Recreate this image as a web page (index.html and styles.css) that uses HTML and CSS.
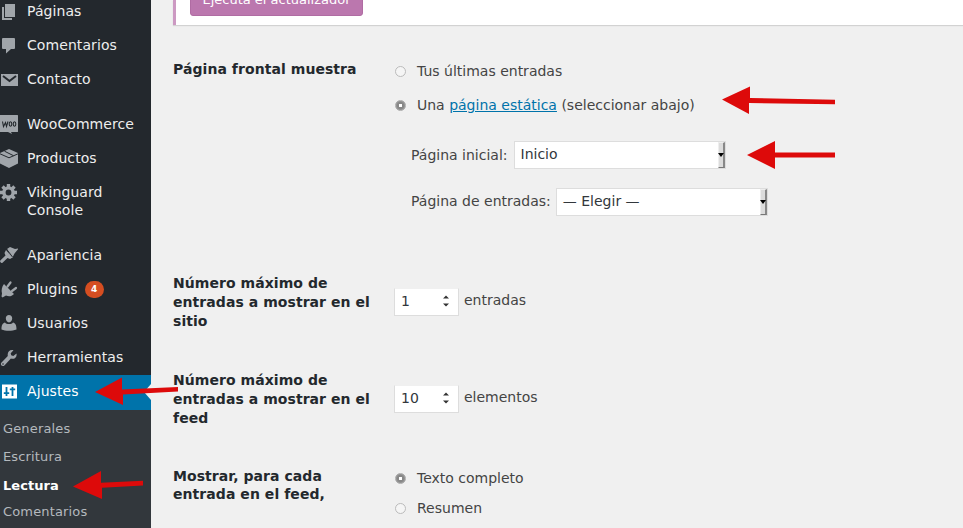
FILE: index.html
```
<!DOCTYPE html>
<html lang="es">
<head>
<meta charset="utf-8">
<title>Ajustes de lectura</title>
<link rel="stylesheet" href="styles.css">
</head>
<body>
<div class="app">
  <nav class="sidebar">
    <ul class="menu">
      <li class="item"><svg class="icon" viewBox="0 0 20 20"><path d="M7 3h10v13H7zM4 6h2v11h8v2H4z"/></svg><span>Páginas</span></li>
      <li class="item"><svg class="icon" viewBox="0 0 20 20"><path d="M5 3h11a1 1 0 0 1 1 1v9a1 1 0 0 1-1 1h-3l-5 4.500V14H5a1 1 0 0 1-1-1V4a1 1 0 0 1 1-1z"/></svg><span>Comentarios</span></li>
      <li class="item"><svg class="icon" viewBox="0 0 20 20"><path d="M3 5h17v12H3z"/><path class="cut" d="M5 7l6.500 5L18 7"/></svg><span>Contacto</span></li>
      <li class="item spaced"><svg class="icon woo" viewBox="0 0 20 20"><path d="M1 1h18a2 2 0 0 1 2 2v13a2 2 0 0 1-2 2h-6l1 2-4-2H1z"/><path class="woo-line" d="M4.500 7.500l1 5 2-4 1 4 1.500-5"/><ellipse class="woo-line" cx="12.500" cy="10" rx="1.300" ry="2.200"/><ellipse class="woo-line" cx="16.500" cy="10" rx="1.300" ry="2.200"/></svg><span>WooCommerce</span></li>
      <li class="item"><svg class="icon" viewBox="0 0 20 20"><path d="M11 1l9 4v10.500L11 20l-9-4.500V5z"/><path class="seam" d="M2 5.800l9 4 9-4M6.500 3.200l9 4.500"/></svg><span>Productos</span></li>
      <li class="item tall"><svg class="icon" viewBox="0 0 20 20"><circle class="gear-ring" cx="10.500" cy="10.500" r="4.600"/><path class="gear-teeth" d="M10.500 2v3M10.500 16v3M2 10.500h3M16 10.500h3M4.500 4.500l2.200 2.200M14.300 14.300l2.200 2.200M4.500 16.500l2.200-2.200M14.300 6.700l2.200-2.200"/></svg><span>Vikinguard<br>Console</span></li>
      <li class="item spaced"><svg class="icon" viewBox="0 0 20 20"><path d="M9 4l3-2 2.500 1 2.500 1 3.500-.5-4 5-2 4-1 .5z"/><path d="M8 5l6.500 7.500-2.500 1.500-2.500-1-5 4.700c-1.500.8-3-.8-2.200-2.200L7.500 10.500 6.500 8z"/><path class="seam" d="M8.500 4l6 8"/></svg><span>Apariencia</span></li>
      <li class="item"><svg class="icon" viewBox="0 0 20 20"><path d="M6 5l10 10c-2.500 2.500-5 2.800-8 1.600L4.500 18.500 3.500 17.500l.5-3C3 11.500 4 7.500 6 5z"/><path class="prong" d="M9.500 7.500l3-4M14 12l4-3"/></svg><span>Plugins</span><b class="badge">4</b></li>
      <li class="item"><svg class="icon" viewBox="0 0 20 20"><path d="M11 2c2 0 3.200 1.300 3.200 3.300S13 9.500 11 9.500 7.800 7.300 7.800 5.300 9 2 11 2zM7 9.500c1.300 2 6.700 2 8 0 2.200.8 3.500 2 3.500 7-4.500 1.700-11 1.700-15 0 0-5 1.300-6.200 3.500-7z"/></svg><span>Usuarios</span></li>
      <li class="item"><svg class="icon" viewBox="0 0 20 20"><path d="M18.500 6.500c.8 3.800-2.500 6.200-5.600 5l-6.500 7c-2 1.600-4.600-.7-3.100-2.800l6.500-6.800C9 5 12 2.300 15.500 3.300l-2.800 3 .5 2 2.100.6z"/><circle class="hole" cx="5" cy="17" r=".8"/></svg><span>Herramientas</span></li>
      <li class="item current"><svg class="icon" viewBox="0 0 20 20"><path d="M4 3.500h15v14H4z"/><path class="slider" d="M8.500 6v9M5.800 12.200h5.400M14.500 6v9M11.800 8.300h5.400"/></svg><span>Ajustes</span></li>
    </ul>
    <ul class="submenu">
      <li>Generales</li>
      <li>Escritura</li>
      <li class="selected">Lectura</li>
      <li>Comentarios</li>
    </ul>
  </nav>
  <main class="content">
    <div class="notice"><a class="button">Ejecuta el actualizador</a></div>
    <section class="row front">
      <h2>Página frontal muestra</h2>
      <div class="field">
        <label class="choice"><i class="radio"></i>Tus últimas entradas</label>
        <label class="choice"><i class="radio on"></i><span>Una <a class="link">página estática</a> (seleccionar abajo)</span></label>
        <div class="picker first"><span>Página inicial:</span><div class="select"><span>Inicio</span><i class="drop"></i></div></div>
        <div class="picker second"><span>Página de entradas:</span><div class="select"><span>— Elegir —</span><i class="drop"></i></div></div>
      </div>
    </section>
    <section class="row">
      <h2>Número máximo de entradas a mostrar en el sitio</h2>
      <div class="amount"><div class="number">1<svg class="spin" viewBox="0 0 6 12"><path d="M0 3.500L3 .5l3 3zM0 8.500h6l-3 3z"/></svg></div>entradas</div>
    </section>
    <section class="row">
      <h2>Número máximo de entradas a mostrar en el feed</h2>
      <div class="amount"><div class="number">10<svg class="spin" viewBox="0 0 6 12"><path d="M0 3.500L3 .5l3 3zM0 8.500h6l-3 3z"/></svg></div>elementos</div>
    </section>
    <section class="row feed">
      <h2>Mostrar, para cada entrada en el feed,</h2>
      <div class="field">
        <label class="choice"><i class="radio on"></i>Texto completo</label>
        <label class="choice"><i class="radio"></i>Resumen</label>
      </div>
    </section>
  </main>
</div>
<svg class="arrows" viewBox="0 0 963 528">
  <path class="notch" d="M151 384l-7 8 7 8z"/>
  <path d="M722 99.500L750 86.500V98L835 99.700V104.300L749 103V114z"/>
  <path d="M747 155L775 141V152.500H835V157.500H775V169z"/>
  <path d="M95 392L122 377.500V389.500L178 387V391.500L123 394.500V405z"/>
  <path d="M73 486.500L101 471V482.700L143 480.700V485.500L102 487.700V499z"/>
</svg>
</body>
</html>
```
FILE: styles.css
```
* { box-sizing: border-box; }
body {
  margin: 0;
  width: 963px;
  height: 528px;
  overflow: hidden;
  background: #f0f0f0;
  color: #444;
  font: 14px/18px "DejaVu Sans", sans-serif;
}
ul { list-style: none; margin: 0; padding: 0; }
h2 { margin: 0; font-size: 14px; line-height: 19px; letter-spacing: .06px; color: #23282d; width: 205px; }
.app { display: flex; height: 528px; overflow: hidden; }
.sidebar { width: 151px; flex: none; background: #23282d; color: #eee; letter-spacing: .08px; }
.menu { margin-top: -6px; }
.item { display: flex; height: 34px; padding: 8px 0 0; white-space: nowrap; }
.item.spaced { margin-top: 11px; }
.item.tall { height: 52px; }
.item.current { background: #0073aa; color: #fff; height: 35px; margin-top: 1px; padding-top: 7px; }
.icon { width: 20px; height: 20px; flex: none; margin: -1px 9px 0 -2px; fill: #a0a5aa; }
.cut { fill: none; stroke: #23282d; stroke-width: 2; }
.woo-line { fill: none; stroke: #23282d; stroke-width: 1.1; }
.seam { fill: none; stroke: #23282d; stroke-width: 1; }
.gear-ring { fill: none; stroke: #a0a5aa; stroke-width: 3.4; }
.gear-teeth { stroke: #a0a5aa; stroke-width: 3.4; }
.prong { fill: none; stroke: #a0a5aa; stroke-width: 2.2; stroke-linecap: round; }
.hole { fill: #23282d; }
.current .icon { fill: #fff; }
.slider { stroke: #0073aa; stroke-width: 1.8; fill: none; }
.badge {
  width: 19px;
  height: 17px;
  margin: 1px 0 0 7px;
  border-radius: 9px;
  background: #d54e21;
  color: #fff;
  font-size: 9px;
  line-height: 17px;
  text-align: center;
}
.submenu { height: 119px; padding: 5px 3px; background: #32373c; color: #b4b9be; font-size: 13px; line-height: 28px; letter-spacing: .15px; }
.submenu .selected { color: #fff; font-weight: bold; line-height: 29px; letter-spacing: .05px; }
.submenu li:last-child { line-height: 23px; }
.content { flex: 1; padding-left: 22px; }
.notice {
  display: flex;
  align-items: flex-start;
  height: 25px;
  padding-left: 14px;
  border-left: 3px solid #cc99c2;
  background: #fff;
  box-shadow: 0 1px 1px rgba(0, 0, 0, .12);
}
.button {
  width: 173px;
  height: 28px;
  margin-top: -12px;
  border: 1px solid #b06ca3;
  border-radius: 3px;
  background: #bb77ae;
  color: #fff;
  font-size: 13px;
  line-height: 22px;
  text-align: center;
}
.row { display: grid; grid-template-columns: 221px 1fr; height: 97px; }
.front { height: 249px; }
.front h2 { padding-top: 35px; }
.front .field { padding-top: 29px; }
.choice { display: flex; align-items: center; height: 34px; }
.radio {
  width: 11px;
  height: 11px;
  margin: 0 11px 0 1px;
  border: 1px solid #bbb;
  border-radius: 50%;
  background: #f5f5f5;
}
.radio.on { border-color: #aaa; background: radial-gradient(circle, #fff 0 1.4px, #888 2px 3.2px, #999 4.5px); }
.link { color: #0073aa; text-decoration: underline; }
.picker { display: flex; align-items: center; gap: 6px; height: 47px; padding-left: 17px; }
.picker.first { margin-top: 9px; }
.picker.second { gap: 5px; }
.picker.second > span { margin-top: -1px; }
.select {
  display: flex;
  justify-content: space-between;
  width: 212px;
  height: 28px;
  padding: 0 0 0 6px;
  border: 1px solid #ddd;
  background: #fff;
  color: #32373c;
  line-height: 25px;
}
.drop {
  width: 7px;
  height: 26px;
  border: 1px solid #eee;
  border-right: 2px solid #888;
  border-bottom-color: #777;
  background: #dcdcdc;
}
.drop::after { content: ""; display: block; margin: 10px 0 0 -1px; border: 3px solid transparent; border-top: 4px solid #000; border-bottom: 0; width: 0; }
.amount { display: flex; align-items: center; gap: 5px; height: 52px; }
.number {
  display: flex;
  align-items: center;
  justify-content: space-between;
  width: 65px;
  height: 28px;
  padding: 0 9px 2px 6px;
  margin-top: 3px;
  border: 1px solid #ddd;
  border-top-color: #f0f0f0;
  background: #fff;
  color: #32373c;
}
.spin { width: 6px; height: 12px; margin-top: 1px; fill: #333; }
.feed h2 { line-height: 18px; margin-top: -1px; }
.feed .choice { height: 30px; }
.feed .field { margin-top: -5px; }
.arrows { position: absolute; left: 0; top: 0; width: 963px; height: 528px; fill: #dd0a0a; pointer-events: none; }
.notch { fill: #f0f0f0; }
```
